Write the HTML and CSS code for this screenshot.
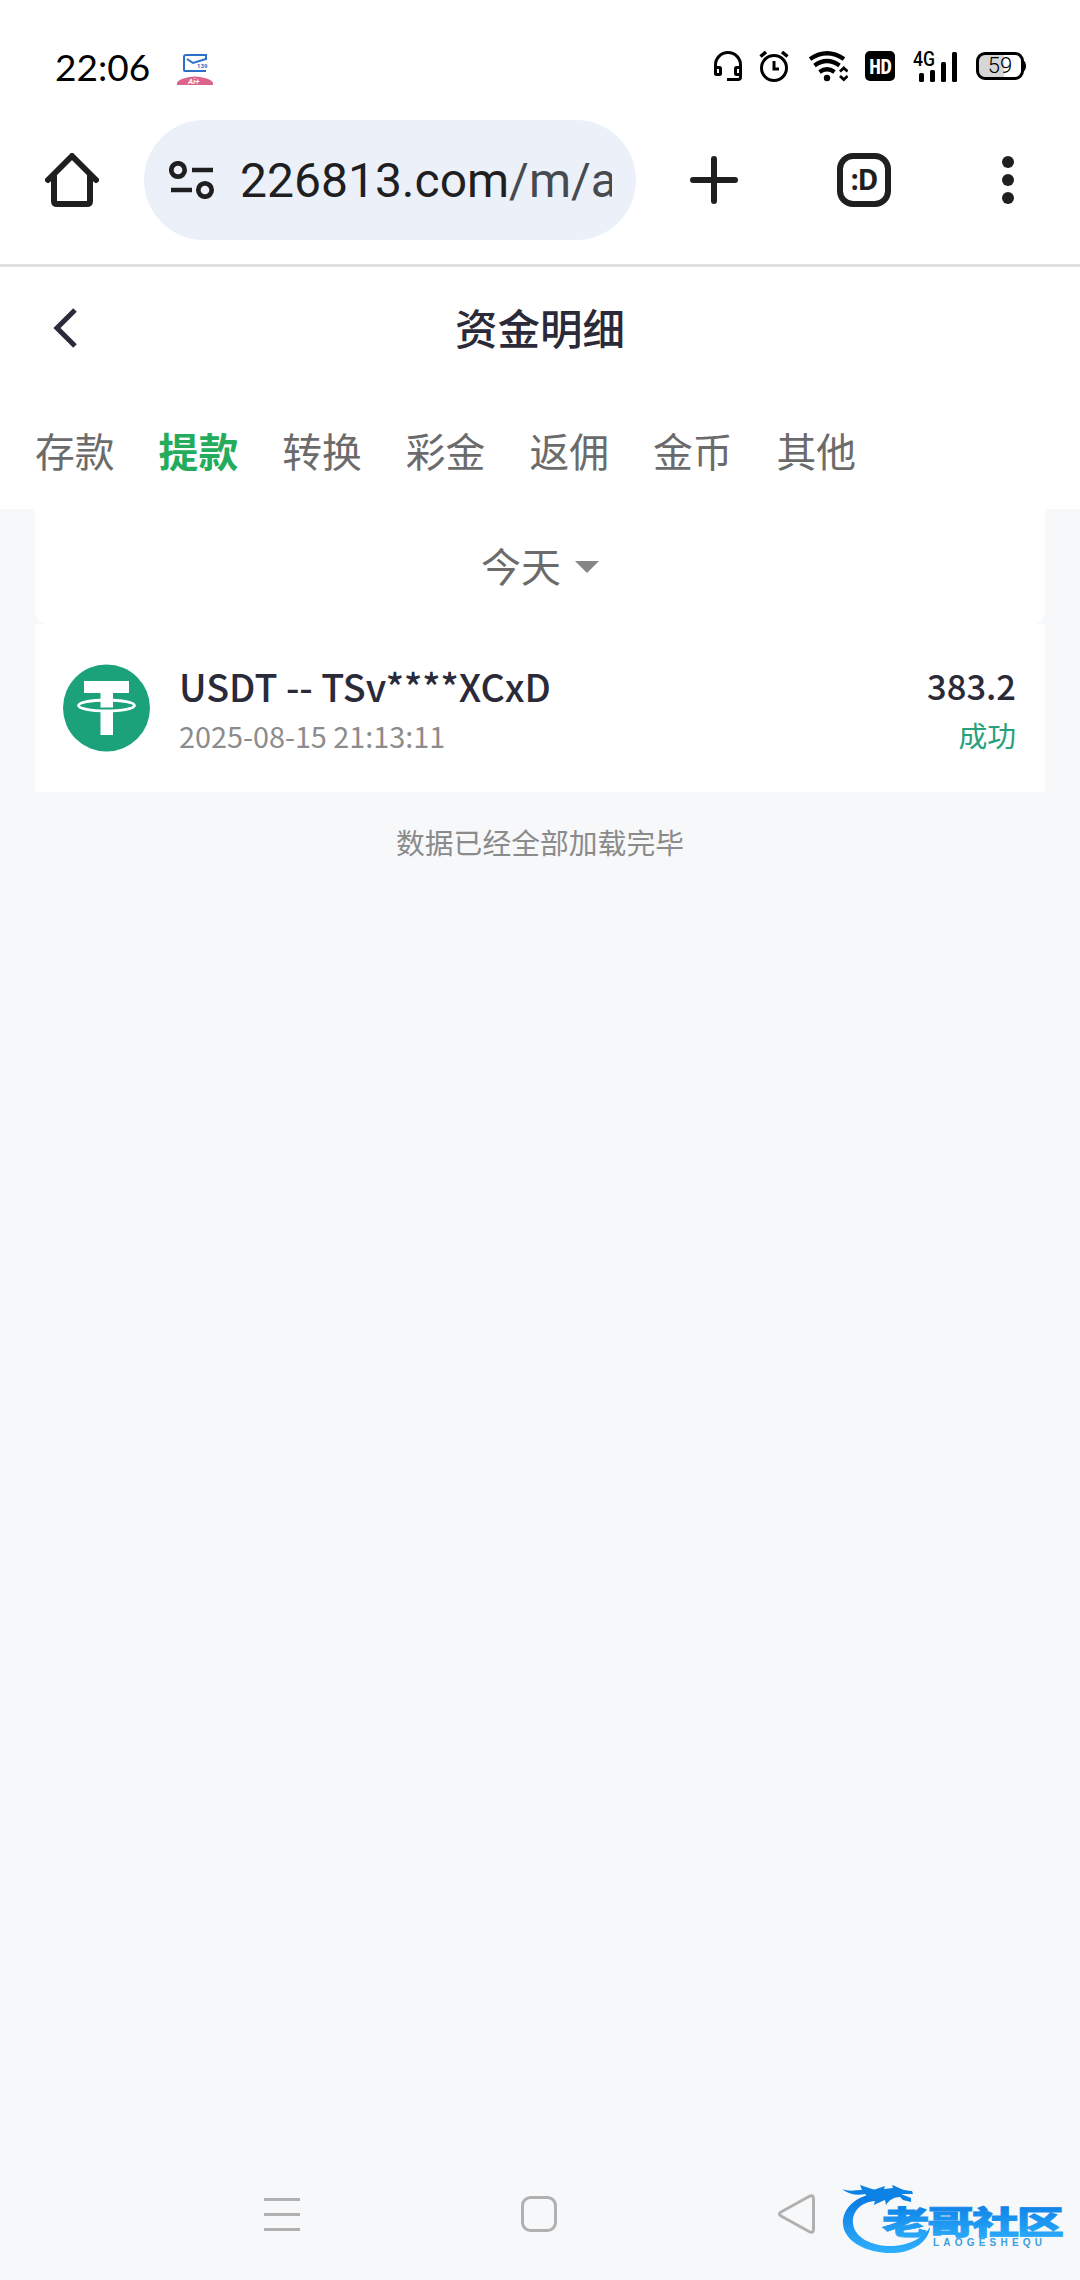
FILE: index.html
```
<!DOCTYPE html>
<html lang="zh-CN">
<head>
    <meta charset="UTF-8">
    <meta name="viewport" content="width=device-width, initial-scale=1.0">
    <title>资金明细</title>
    <link rel="stylesheet" href="styles.css">
</head>
<body>
    <!-- Status bar -->
    <div class="status-bar">
        <span class="time">22:06</span>
        <svg class="notice" width="36" height="31" viewBox="0 0 36 31">
            <path d="M29 17H8Q7 17 7 16V3Q7 1 9 1H29V5L16 9L10 5" fill="none" stroke="#2c6fc9" stroke-width="2"/>
            <text x="20" y="14" font-size="6" font-weight="bold" fill="#2c6fc9">139</text>
            <path d="M0 31V29Q1 26 8 24Q18 21 28 24Q35 26 36 29V31Z" fill="#dc648c"/>
            <text x="11" y="30" font-size="8" font-weight="bold" font-style="italic" fill="#fff">Ai+</text>
        </svg>
        <div class="status-icons">
            <svg width="28" height="31" viewBox="0 0 28 31">
                <path d="M1.5 23V14A12.5 12.5 0 0 1 26.500 14V26Q26.500 28.500 24 28.500H13" fill="none" stroke="#000" stroke-width="3"/>
                <rect x="1.500" y="16.500" width="5" height="7" rx="1" fill="none" stroke="#000" stroke-width="3"/>
                <rect x="21.500" y="16.500" width="5" height="7" rx="1" fill="none" stroke="#000" stroke-width="3"/>
            </svg>
            <svg class="alarm" width="30" height="31" viewBox="0 0 30 31">
                <circle cx="15" cy="17" r="12.500" fill="none" stroke="#000" stroke-width="3"/>
                <path d="M15 10V18H20" fill="none" stroke="#000" stroke-width="3"/>
                <path d="M1.500 5.500L7 1M23 1L28.500 5.500" stroke="#000" stroke-width="3.500"/>
            </svg>
            <svg class="wifi" width="39" height="31" viewBox="0 0 39 31">
                <g fill="none" stroke="#000" stroke-width="4.200">
                    <path d="M1 8Q18 -3.500 35 8"/>
                    <path d="M5.500 14.500Q18 5.500 30.500 14.500"/>
                    <path d="M10.500 21Q18 15.500 25.500 21"/>
                    <path d="M31 20.500L34.800 17L38.600 20.500M31 25L34.800 28.500L38.600 25" stroke-width="2.800"/>
                </g>
                <circle cx="18" cy="27" r="3.200"/>
            </svg>
            <span class="hd">HD</span>
            <svg class="signal" width="45" height="31" viewBox="0 0 45 31">
                <text x="0" y="15" font-size="20" font-weight="500" textLength="22" lengthAdjust="spacingAndGlyphs">4G</text>
                <rect x="6" y="22" width="5" height="9" rx="1.500"/>
                <rect x="17" y="19" width="5" height="12" rx="1.500"/>
                <rect x="28" y="11" width="5" height="20" rx="1.500"/>
                <rect x="39" y="1" width="5" height="30" rx="1.500"/>
            </svg>
            <svg class="battery" width="50" height="28" viewBox="0 0 50 28">
                <path d="M8 3H28V25H8Q3 25 3 20V8Q3 3 8 3Z" fill="#d6d6d6"/>
                <rect x="1.500" y="1.500" width="45" height="25" rx="7.500" fill="none" stroke="#000" stroke-width="3"/>
                <path d="M47 8Q50 10 50 14Q50 18 47 20Z"/>
                <text x="24" y="21" font-size="22" font-weight="300" text-anchor="middle">59</text>
            </svg>
        </div>
    </div>

    <!-- Browser toolbar -->
    <div class="toolbar">
        <svg width="54" height="54" viewBox="0 0 54 54" fill="none" stroke="#1f1f1f" stroke-width="6" stroke-linejoin="round" stroke-linecap="round">
            <path d="M3 27L27 3L51 27"/>
            <path d="M9 23V48Q9 51 12 51H42Q45 51 45 48V23"/>
        </svg>
        <div class="address">
            <svg width="46" height="38" viewBox="0 0 46 38" fill="none" stroke="#1f1f1f" stroke-width="4.700">
                <circle cx="9" cy="9" r="6.700"/>
                <circle cx="36" cy="29" r="6.700"/>
                <path d="M23 9H44M2 29H23"/>
            </svg>
            <span class="url">226813.com<span class="path">/m/a</span></span>
        </div>
        <svg class="plus" width="48" height="48" viewBox="0 0 48 48" stroke="#1f1f1f" stroke-width="6" stroke-linecap="round">
            <path d="M3 24H45M24 3V45"/>
        </svg>
        <span class="tab-count">:D</span>
        <svg class="more" width="12" height="48" viewBox="0 0 12 48" fill="#1f1f1f">
            <circle cx="6" cy="6" r="6"/>
            <circle cx="6" cy="24" r="6"/>
            <circle cx="6" cy="42" r="6"/>
        </svg>
    </div>

    <!-- Page title -->
    <div class="header">
        <svg class="back" width="24" height="40" viewBox="0 0 24 40">
            <path d="M22 2L4 20L22 38" fill="none" stroke="#2a2a38" stroke-width="5"/>
        </svg>
        <h1>资金明细</h1>
    </div>

    <div class="tabs">
        <span>存款</span>
        <span class="active">提款</span>
        <span>转换</span>
        <span>彩金</span>
        <span>返佣</span>
        <span>金币</span>
        <span>其他</span>
    </div>

    <!-- Records -->
    <div class="content">
        <div class="filter">
            <span class="day">今天</span>
            <span class="caret"></span>
        </div>
        <div class="record">
            <svg width="88" height="88" viewBox="0 0 88 88">
                <circle cx="44.500" cy="44" r="43.500" fill="#1ba27a"/>
                <path d="M22 17H67V29H51V71H38.500V29H22Z" fill="#fff"/>
                <path d="M38 43.500H51.500V46.500H38Z" fill="#1ba27a"/>
                <ellipse cx="44.500" cy="41.500" rx="28" ry="5.500" fill="none" stroke="#fff" stroke-width="2.800"/>
            </svg>
            <div class="info">
                <p class="name">USDT -- TSv****XCxD</p>
                <p class="date">2025-08-15 21:13:11</p>
            </div>
            <div class="amount">
                <p class="value">383.2</p>
                <p class="state">成功</p>
            </div>
        </div>
        <p class="end">数据已经全部加载完毕</p>
    </div>

    <!-- System navigation -->
    <div class="nav-bar">
        <svg width="36" height="40" viewBox="0 0 36 40" stroke="#b0b0b0" stroke-width="3">
            <path d="M0 5.500H36M0 20.500H36M0 35.500H36"/>
        </svg>
        <svg width="36" height="40" viewBox="0 0 36 40" fill="none" stroke="#b0b0b0" stroke-width="3">
            <rect x="1.500" y="3.500" width="33" height="33" rx="8"/>
        </svg>
        <svg width="37" height="40" viewBox="0 0 37 40" fill="none" stroke="#b0b0b0" stroke-width="3" stroke-linejoin="round">
            <path d="M31 2.500Q35.500 0 35.500 5V35Q35.500 40 31 37.500L3 22Q0 20 3 18Z"/>
        </svg>
    </div>

    <svg class="watermark" width="230" height="76" viewBox="0 0 230 76">
        <defs>
            <linearGradient id="blue" x1="0" y1="0" x2="0" y2="1">
                <stop offset="0" stop-color="#0878e2"/>
                <stop offset="1" stop-color="#2eb0fc"/>
            </linearGradient>
        </defs>
        <!-- dragon -->
        <path d="M28 15C10 20 2 33 3 44C4 62 28 74 54 73C74 72 89 61 90 47C84 57 70 65 54 66C33 67 14 58 13 43C12 31 22 21 37 21Z" fill="url(#blue)"/>
        <path d="M2 9C9 12 16 10 22 10L20 5L32 9C35 10 36 9 39 8L45 6L44 9L53 8L52 5C58 7 63 11 72 11L73 14L61 14L71 18L71 22L63 20L60 17C54 17 49 20 46 25L45 20C42 21 38 23 34 25L35 20C30 18 27 17 25 14C17 16 8 14 2 9Z" fill="#0c82e4"/>
        <text class="mark-cn" x="0" y="0" transform="translate(42 54) scale(1.480 1)" textLength="123" fill="url(#blue)" stroke="url(#blue)" stroke-width="0.800">老哥社区</text>
        <text class="mark-en" x="93" y="66" textLength="109" fill="#3b9fe0">LAOGESHEQU</text>
    </svg>
</body>
</html>
```
FILE: styles.css
```
* {
    box-sizing: border-box;
}
body {
    margin: 0;
    height: 2280px;
    display: flex;
    flex-direction: column;
    position: relative;
    overflow: hidden;
    font-family: 'Noto Sans CJK SC', sans-serif;
    background-color: #f7f8fa;
    color: #2a2a38;
}
h1, p {
    margin: 0;
}
svg {
    display: block;
    flex-shrink: 0;
}
.status-bar {
    display: flex;
    align-items: center;
    height: 96px;
    padding: 36px 54px 0 55px;
    background-color: #fff;
    color: #000;
}
.time {
    width: 122px;
    padding-top: 2px;
    font-family: 'Lato', sans-serif;
    font-size: 37px;
    line-height: 60px;
}
.notice {
    margin-top: 6px;
    font-family: 'Roboto', sans-serif;
}
.status-icons {
    display: flex;
    align-items: center;
    margin-left: auto;
    font-family: 'Roboto', sans-serif;
}
.alarm {
    margin-left: 17px;
}
.wifi {
    margin-left: 20px;
}
.hd {
    width: 30px;
    height: 30px;
    margin-left: 17px;
    border-radius: 5px;
    background-color: #000;
    color: #fff;
    font-family: 'Open Sans', sans-serif;
    font-size: 21px;
    font-weight: 700;
    font-stretch: condensed;
    line-height: 30px;
    text-align: center;
    letter-spacing: -1px;
}
.signal {
    margin-left: 18px;
}
.battery {
    margin-left: 18px;
}
.toolbar {
    display: flex;
    align-items: center;
    height: 171px;
    padding-left: 45px;
    background-color: #fff;
    border-bottom: 3px solid #e1e1e1;
}
.address {
    display: flex;
    align-items: center;
    width: 492px;
    height: 120px;
    margin-left: 45px;
    padding: 0 24px 0 25px;
    border-radius: 60px;
    background-color: #ecf0f9;
}
.url {
    flex: 1;
    margin-left: 25px;
    padding-top: 2px;
    overflow: hidden;
    white-space: nowrap;
    font-family: 'Roboto', sans-serif;
    font-size: 48px;
    line-height: 60px;
    color: #1f1f1f;
}
.path {
    color: #474a4f;
}
.plus {
    margin-left: 54px;
}
.tab-count {
    width: 54px;
    height: 54px;
    margin-left: 99px;
    border: 6px solid #1f1f1f;
    border-radius: 16px;
    color: #1f1f1f;
    font-family: 'Noto Sans', sans-serif;
    font-size: 28px;
    font-weight: 700;
    line-height: 41px;
    letter-spacing: -1px;
    text-align: center;
}
.more {
    margin-left: 111px;
}
.header {
    display: grid;
    grid-template-columns: 1fr auto 1fr;
    align-items: center;
    height: 122px;
    background-color: #fff;
}
.back {
    margin-left: 53px;
}
.header h1 {
    padding-bottom: 2px;
    font-size: 42.5px;
    font-weight: 500;
    line-height: 60px;
}
.tabs {
    display: flex;
    align-items: center;
    gap: 44px;
    height: 120px;
    padding: 2px 0 0 35px;
    background-color: #fff;
    color: #6b6b6b;
    font-size: 39.8px;
    line-height: 60px;
}
.active {
    color: #24ab5c;
    font-weight: 700;
}
.content {
    flex: 1;
    padding: 0 35px;
}
.filter {
    display: flex;
    justify-content: center;
    align-items: center;
    gap: 14px;
    height: 115px;
    border-radius: 0 0 12px 12px;
    background-color: #fff;
    color: #6b6b6b;
    font-size: 40px;
    line-height: 60px;
}
.day {
    padding-bottom: 4px;
}
.caret {
    border: 12px solid transparent;
    border-top-color: #868686;
    border-bottom: none;
}
.record {
    display: flex;
    align-items: center;
    height: 168px;
    padding: 0 29px 0 27px;
    background-color: #fff;
}
.info {
    margin-left: 29px;
    padding-top: 5px;
}
.name {
    font-size: 37.700px;
    font-weight: 500;
    line-height: 50px;
}
.date, .state, .end {
    font-size: 28.8px;
    line-height: 50px;
}
.date {
    color: #8c8c8c;
}
.amount {
    margin-left: auto;
    padding-top: 4px;
    text-align: right;
}
.value {
    font-size: 34.500px;
    font-weight: 500;
    line-height: 50px;
}
.state {
    color: #26a17b;
}
.end {
    margin-top: 25px;
    color: #8b8b8b;
    text-align: center;
}
.nav-bar {
    display: flex;
    align-items: center;
    gap: 221px;
    height: 132px;
    padding-left: 264px;
}
.watermark {
    position: absolute;
    left: 840px;
    top: 2180px;
}
.mark-cn {
    font-size: 32px;
    font-weight: 900;
}
.mark-en {
    font-family: 'Liberation Sans', sans-serif;
    font-size: 10px;
    font-weight: 700;
}
```
